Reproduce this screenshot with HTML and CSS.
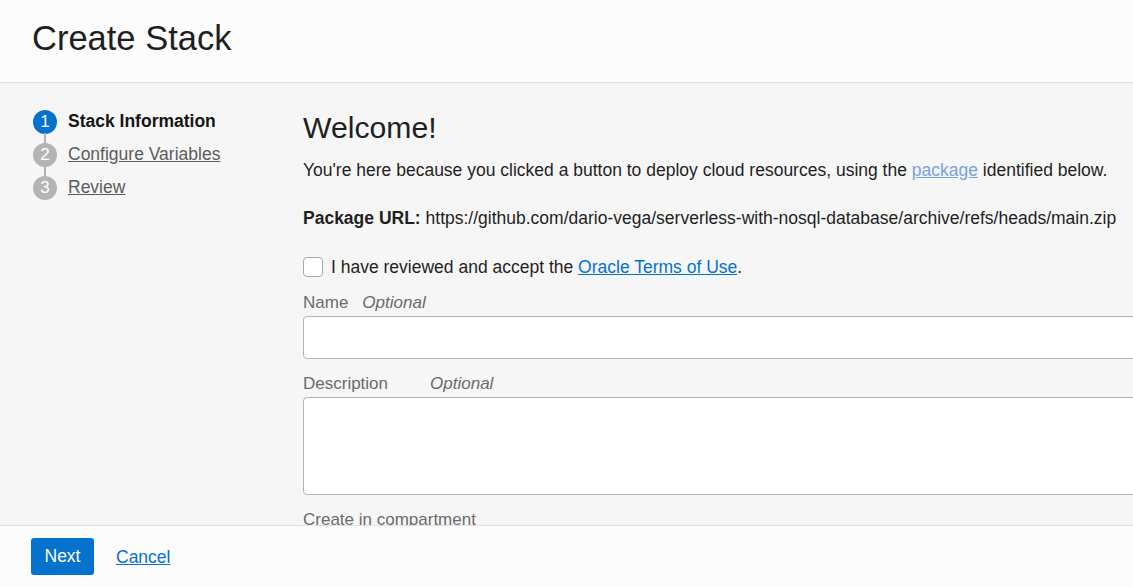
FILE: index.html
```html
<!DOCTYPE html>
<html>
<head>
<meta charset="utf-8">
<link rel="stylesheet" href="styles.css">
</head>
<body>
<div class="page">
  <header class="header">
    <h1 class="title">Create Stack</h1>
  </header>
  <main class="main">
    <nav class="steps">
      <div class="step active"><span class="num">1</span><span class="label">Stack Information</span></div>
      <div class="step"><span class="num">2</span><a class="label" href="#">Configure Variables</a></div>
      <div class="step last"><span class="num">3</span><a class="label" href="#">Review</a></div>
    </nav>
    <section class="content">
      <h2 class="welcome">Welcome!</h2>
      <p class="intro">You're here because you clicked a button to deploy cloud resources, using the <a class="pkg" href="#">package</a> identified below.</p>
      <p class="url"><b>Package URL:</b> https://github.com/dario-vega/serverless-with-nosql-database/archive/refs/heads/main.zip</p>
      <label class="check-row"><span class="checkbox"></span><span>I have reviewed and accept the <a class="terms" href="#">Oracle Terms of Use</a>.</span></label>
      <div class="field">
        <div class="flabel"><span>Name</span><i class="opt">Optional</i></div>
        <div class="input"></div>
      </div>
      <div class="field">
        <div class="flabel"><span>Description</span><i class="opt opt-desc">Optional</i></div>
        <div class="textarea"></div>
      </div>
      <div class="field">
        <div class="flabel"><span>Create in compartment</span></div>
      </div>
    </section>
  </main>
  <footer class="footer">
    <button class="next">Next</button>
    <a class="cancel" href="#">Cancel</a>
  </footer>
</div>
</body>
</html>
```
FILE: styles.css
```css
* { box-sizing: border-box; }
html, body { margin: 0; padding: 0; }
body {
  font-family: "Liberation Sans", Arial, sans-serif;
  color: #1f1f1f;
  background: #f6f6f6;
}
.page {
  display: flex;
  flex-direction: column;
  height: 587px;
  width: 1133px;
  overflow: hidden;
}
.header {
  height: 83px;
  flex: none;
  background: #fcfcfc;
  border-bottom: 1px solid #e2e2e2;
  padding: 0 32px;
  display: flex;
  align-items: center;
}
.title {
  margin: 0;
  font-size: 34.5px;
  font-weight: normal;
  color: #1f1f1f;
  position: relative;
  top: -3px;
}
.main {
  flex: 1;
  display: flex;
  overflow: hidden;
  background: #f6f6f6;
  padding-top: 22px;
}
.steps {
  width: 303px;
  flex: none;
  padding-left: 33px;
}
.step {
  display: flex;
  align-items: center;
  height: 33px;
  position: relative;
}
.step::after {
  content: "";
  position: absolute;
  left: 11px;
  top: 28px;
  width: 2px;
  height: 10px;
  background: #b3b3b3;
}
.step.last::after { display: none; }
.num {
  width: 24px;
  height: 24px;
  border-radius: 50%;
  background: #b4b4b4;
  color: #fff;
  font-size: 17px;
  display: flex;
  align-items: center;
  justify-content: center;
  margin-right: 11px;
  flex: none;
}
.step.active .num { background: #0572ce; }
.label {
  font-size: 17.5px;
  color: #5c5c5c;
}
.step.active .label {
  font-weight: bold;
  color: #161513;
}
.content {
  flex: none;
  width: 900px;
}
.welcome {
  margin: 6px 0 0;
  font-size: 30.2px;
  font-weight: normal;
  line-height: 34px;
  color: #1f1f1f;
}
.intro {
  margin: 14px 0 0;
  font-size: 17.5px;
  line-height: 22px;
}
.pkg { color: #77a3df; }
.url {
  margin: 26px 0 0;
  font-size: 17.5px;
  line-height: 22px;
}
.check-row {
  display: flex;
  align-items: center;
  margin-top: 27px;
  font-size: 17.5px;
  line-height: 22px;
}
.checkbox {
  width: 20px;
  height: 20px;
  border: 1px solid #a8a8a8;
  border-radius: 4px;
  background: #fff;
  margin-right: 8px;
  flex: none;
}
.terms { color: #0572ce; }
.field { margin-top: 15px; }
.flabel {
  display: flex;
  font-size: 17px;
  line-height: 20px;
  color: #6b6b6b;
  margin-bottom: 3px;
}
.opt {
  margin-left: 14px;
}
.opt-desc { margin-left: 42px; }
.input {
  height: 43px;
  background: #fff;
  border: 1px solid #b2b4ba;
  border-radius: 4px;
}
.textarea {
  height: 98px;
  background: #fff;
  border: 1px solid #b2b4ba;
  border-radius: 4px;
}
.footer {
  height: 62px;
  flex: none;
  background: #fcfcfc;
  border-top: 1px solid #e2e2e2;
  display: flex;
  align-items: center;
  padding-left: 31px;
}
.next {
  width: 63px;
  height: 37px;
  background: #0572ce;
  color: #fff;
  border: none;
  border-radius: 3px;
  font-family: "Liberation Sans", Arial, sans-serif;
  font-size: 17.5px;
  padding: 0;
}
.cancel {
  margin-left: 22px;
  color: #0572ce;
  font-size: 17.5px;
  position: relative;
  top: 1px;
}
```
